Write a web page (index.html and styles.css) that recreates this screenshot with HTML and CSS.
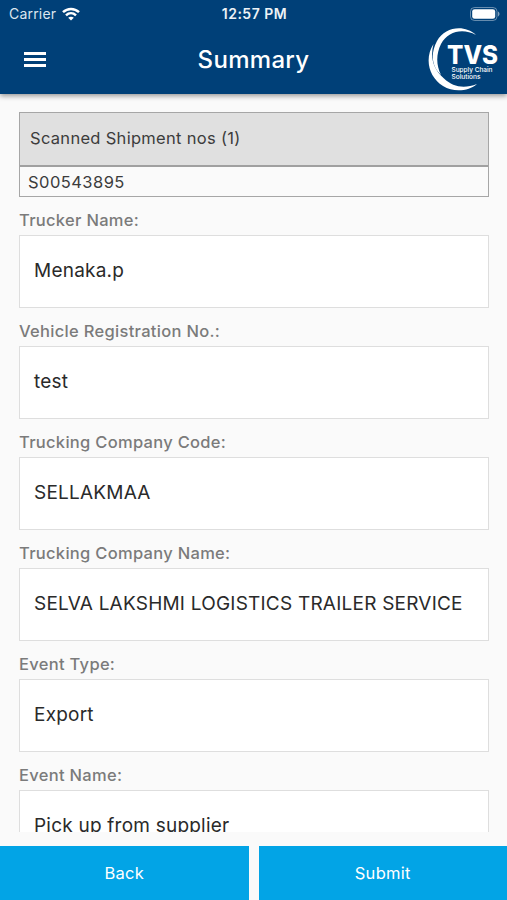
FILE: index.html
```html
<!DOCTYPE html>
<html lang="en">
<head>
  <meta charset="UTF-8">
  <meta name="viewport" content="width=device-width, initial-scale=1.0">
  <title>Summary</title>
  <link rel="stylesheet" href="styles.css">
</head>
<body>
  <header class="header">
    <div class="status-bar">
      <div class="carrier">
        <span>Carrier</span>
        <svg class="wifi" width="18" height="14" viewBox="0 0 18 14" fill="none" stroke="#fff" stroke-width="2.5">
          <path d="M1 5.2C5.6 0.8 12.4 0.8 17 5.2"/>
          <path d="M4 8.3C6.9 5.6 11.1 5.6 14 8.3"/>
          <path d="M9 13.6L6.2 10.8C7.8 9.3 10.2 9.3 11.8 10.8Z" fill="#fff" stroke="none"/>
        </svg>
      </div>
      <span class="time">12:57 PM</span>
      <svg class="battery" width="30" height="14" viewBox="0 0 30 14">
        <rect x="0.5" y="0.5" width="26.5" height="13" rx="4" fill="none" stroke="#fff" stroke-opacity="0.4"/>
        <rect x="2.2" y="2.2" width="23" height="9.6" rx="2.4" fill="#fff"/>
        <path d="M28 4.6C30 5.3 30 8.7 28 9.4Z" fill="#fff" fill-opacity="0.5"/>
      </svg>
    </div>
    <div class="app-bar">
      <button class="menu" aria-label="Menu">
        <span></span>
        <span></span>
        <span></span>
      </button>
      <h1>Summary</h1>
      <svg class="logo" width="74" height="66" viewBox="0 0 74 66" fill="#fff">
        <path d="M50 8C38-3 19 0 11 14C4 27 6 40 15 48C10 38 10 27 15 17C22 4 37 1 50 8Z"/>
        <path d="M7.5 17C-2 32 3 50 17 59C28 66 43 64 51 57C38 62 27 60 18 51.5C7 42 4 30 7.5 17Z"/>
        <text class="logo-name" x="21" y="37.3" textLength="51" lengthAdjust="spacingAndGlyphs">TVS</text>
        <text class="logo-sub" x="25.5" y="45.2" textLength="41" lengthAdjust="spacingAndGlyphs">Supply Chain</text>
        <text class="logo-sub" x="25.5" y="52.2" textLength="29" lengthAdjust="spacingAndGlyphs">Solutions</text>
      </svg>
    </div>
  </header>

  <main class="content">
    <div class="shipments">
      <div class="shipments-title">Scanned Shipment nos (1)</div>
      <div class="shipments-row">S00543895</div>
    </div>

    <div class="field">
      <div class="label">Trucker Name:</div>
      <div class="value">Menaka.p</div>
    </div>
    <div class="field">
      <div class="label">Vehicle Registration No.:</div>
      <div class="value">test</div>
    </div>
    <div class="field">
      <div class="label">Trucking Company Code:</div>
      <div class="value">SELLAKMAA</div>
    </div>
    <div class="field">
      <div class="label">Trucking Company Name:</div>
      <div class="value">SELVA LAKSHMI LOGISTICS TRAILER SERVICE</div>
    </div>
    <div class="field">
      <div class="label">Event Type:</div>
      <div class="value">Export</div>
    </div>
    <div class="field">
      <div class="label">Event Name:</div>
      <div class="value">Pick up from supplier</div>
    </div>
  </main>

  <footer class="actions">
    <button class="action">Back</button>
    <button class="action">Submit</button>
  </footer>
</body>
</html>
```

FILE: styles.css
```css
* {
  box-sizing: border-box;
}

body {
  margin: 0;
  height: 100vh;
  display: flex;
  flex-direction: column;
  overflow: hidden;
  font-family: Inter, 'Liberation Sans', sans-serif;
  background-color: #fafafa;
  color: #2a2a2a;
}

button {
  border: 0;
  padding: 0;
  font-family: inherit;
  color: #fff;
}

/* header */
.header {
  flex: none;
  height: 94px;
  background-color: #004078;
  color: #fff;
  box-shadow: 0 2px 5px rgba(0, 0, 0, 0.4);
}

.status-bar {
  height: 27px;
  padding: 0 7px 0 9px;
  display: grid;
  grid-template-columns: 1fr auto 1fr;
  align-items: center;
}

.carrier {
  display: flex;
  align-items: center;
  gap: 6px;
  font-size: 14px;
  letter-spacing: 0.2px;
  color: #dce6ef;
}

.time {
  font-size: 14px;
  font-weight: 600;
  letter-spacing: 0.5px;
  color: #edf2f6;
}

.battery {
  justify-self: end;
}

.app-bar {
  height: 67px;
  padding: 0 7px;
  display: grid;
  grid-template-columns: 1fr auto 1fr;
  align-items: center;
}

.menu {
  display: flex;
  flex-direction: column;
  gap: 3px;
  width: 22px;
  margin-left: 17px;
  margin-bottom: 2px;
  background: none;
}

.menu span {
  height: 3px;
  background-color: #fff;
}

h1 {
  margin: 0 0 2px;
  font-size: 24px;
  font-weight: 500;
  letter-spacing: 0.3px;
}

.logo {
  justify-self: end;
  align-self: start;
}

.logo-name {
  font-size: 25.5px;
  font-weight: 800;
}

.logo-sub {
  font-size: 6.3px;
  font-weight: 500;
}

/* scrolling content */
.content {
  flex: 1;
  min-height: 0;
  overflow: hidden;
  margin-top: 18px;
  padding: 0 18px 0 19px;
}

.shipments {
  border: 1px solid #a6a6a6;
  letter-spacing: 0.3px;
  font-size: 16.5px;
  color: #3c3c3c;
}

.shipments-title {
  height: 54px;
  padding-left: 10px;
  line-height: 51px;
  background-color: #e0e0e0;
  border-bottom: 2px solid #a0a0a0;
}

.shipments-row {
  height: 29px;
  padding-left: 8px;
  line-height: 30px;
  letter-spacing: 0.45px;
}

.label {
  height: 38px;
  padding-top: 13px;
  font-size: 16.5px;
  font-weight: 500;
  line-height: 20px;
  letter-spacing: 0.3px;
  color: #7b7b7b;
}

.value {
  height: 73px;
  padding-left: 14px;
  border: 1px solid #dedede;
  background-color: #fff;
  font-size: 19px;
  line-height: 70px;
  letter-spacing: 0.22px;
  white-space: nowrap;
}

/* bottom buttons */
.actions {
  flex: none;
  display: flex;
  gap: 10px;
  height: 54px;
  margin-top: 14px;
}

.action {
  flex: 1;
  background-color: #02a4e6;
  font-size: 16.5px;
  letter-spacing: 0.3px;
}
```
